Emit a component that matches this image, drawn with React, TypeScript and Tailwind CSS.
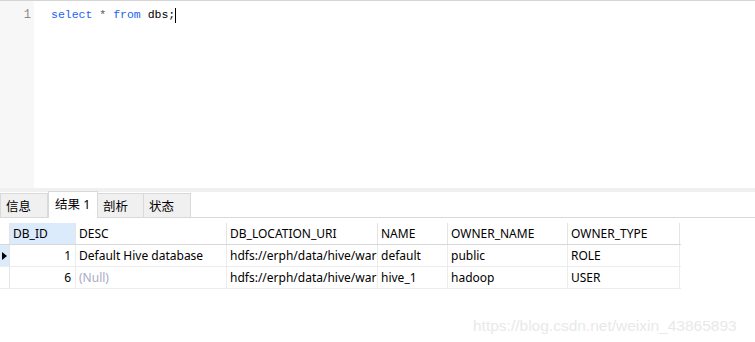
import React from 'react'

const COLS = [
  { key: 'id', label: 'DB_ID', w: 66, right: true },
  { key: 'desc', label: 'DESC', w: 151 },
  { key: 'loc', label: 'DB_LOCATION_URI', w: 151 },
  { key: 'name', label: 'NAME', w: 70 },
  { key: 'owner', label: 'OWNER_NAME', w: 120 },
  { key: 'type', label: 'OWNER_TYPE', w: 112 },
]

const ROWS: Record<string, string | null>[] = [
  { id: '1', desc: 'Default Hive database', loc: 'hdfs://erph/data/hive/war', name: 'default', owner: 'public', type: 'ROLE' },
  { id: '6', desc: null, loc: 'hdfs://erph/data/hive/war', name: 'hive_1', owner: 'hadoop', type: 'USER' },
]

const TABS = [
  { label: '信息', w: 47 },
  { label: '结果 1', w: 50, active: true },
  { label: '剖析', w: 46 },
  { label: '状态', w: 47 },
]

export default function App() {
  return (
    <div
      className="relative w-[755px] h-[342px] overflow-hidden bg-white text-black"
      style={{ fontFamily: '"Noto Sans", "Noto Sans CJK SC", sans-serif' }}
    >
      {/* Editor */}
      <div className="flex h-[188px] border-t border-[#d4d4d4]">
        <div className="w-[34px] bg-[#f7f7f7] flex justify-end pr-[3px] pt-[5px]">
          <span className="text-[12px] leading-[18px] text-[#8a8a8a] font-['Liberation_Mono',monospace]">1</span>
        </div>
        <div className="flex-1 pl-[17px] pt-[5px]">
          <div className="flex items-center text-[11.5px] leading-[18px] font-['Liberation_Mono',monospace]">
            <span className="text-[#1a64f0]">select</span>
            <span className="text-[#555]">&nbsp;*&nbsp;</span>
            <span className="text-[#1a64f0]">from</span>
            <span>&nbsp;dbs;</span>
            <span className="inline-block w-px h-[15px] bg-black" />
          </div>
        </div>
      </div>

      {/* Splitter */}
      <div className="h-[4px] bg-[#f0f0f0]" />

      {/* Tabs */}
      <div className="flex items-end h-[26px] border-b border-[#d9d9d9]">
        {TABS.map((t) =>
          t.active ? (
            <div
              key={t.label}
              className="h-[27px] -mb-px flex items-center pl-[6px] pt-[1px] bg-white border border-b-0 border-[#d9d9d9] text-[12.5px]"
              style={{ width: t.w }}
            >
              {t.label}
            </div>
          ) : (
            <div
              key={t.label}
              className="h-[24px] flex items-center pl-[5px] pt-[4px] bg-[#f0f0f0] border border-b-0 border-[#d9d9d9] text-[12.5px] -ml-px first:ml-0"
              style={{ width: t.w + 1 }}
            >
              {t.label}
            </div>
          )
        )}
      </div>

      {/* Grid */}
      <div className="mt-[5px] flex flex-col text-[12px] w-[681px]">
        <div className="flex h-[22px] border-b border-[#d8d8d8]">
          <div className="w-[10px] border-r border-[#e4e4e4]" />
          {COLS.map((c, i) => (
            <div
              key={c.key}
              className={`flex items-center pl-[3px] pt-px border-r border-[#e4e4e4] ${i === 0 ? 'bg-[#dcebfb]' : 'bg-white'}`}
              style={{ width: c.w }}
            >
              {c.label}
            </div>
          ))}
        </div>
        {ROWS.map((r, ri) => (
          <div key={ri} className="flex h-[22px] border-b border-[#ececec]">
            <div className={`w-[10px] flex items-center border-r border-[#e4e4e4] ${ri === 0 ? 'bg-[#dcebfb]' : ''}`}>
              {ri === 0 && (
                <svg width="8" height="10" viewBox="0 0 8 10" className="ml-px">
                  <path d="M1 1 L6 5 L1 9 Z" fill="#000" />
                </svg>
              )}
            </div>
            {COLS.map((c) => {
              const v = r[c.key]
              return (
                <div
                  key={c.key}
                  className={`flex items-center pt-px overflow-hidden whitespace-nowrap border-r border-[#ececec] ${c.right ? 'justify-end pr-[4px]' : 'pl-[3px]'}`}
                  style={{ width: c.w }}
                >
                  {v === null ? <span className="text-[#a9a9c6]">(Null)</span> : v}
                </div>
              )
            })}
          </div>
        ))}
      </div>

      {/* Watermark */}
      <div className="absolute left-[473px] top-[314px] text-[15.5px] text-[#e9e9e9] font-['Liberation_Sans',Arial,sans-serif] whitespace-nowrap">
        https://blog.csdn.net/weixin_43865893
      </div>
    </div>
  )
}
